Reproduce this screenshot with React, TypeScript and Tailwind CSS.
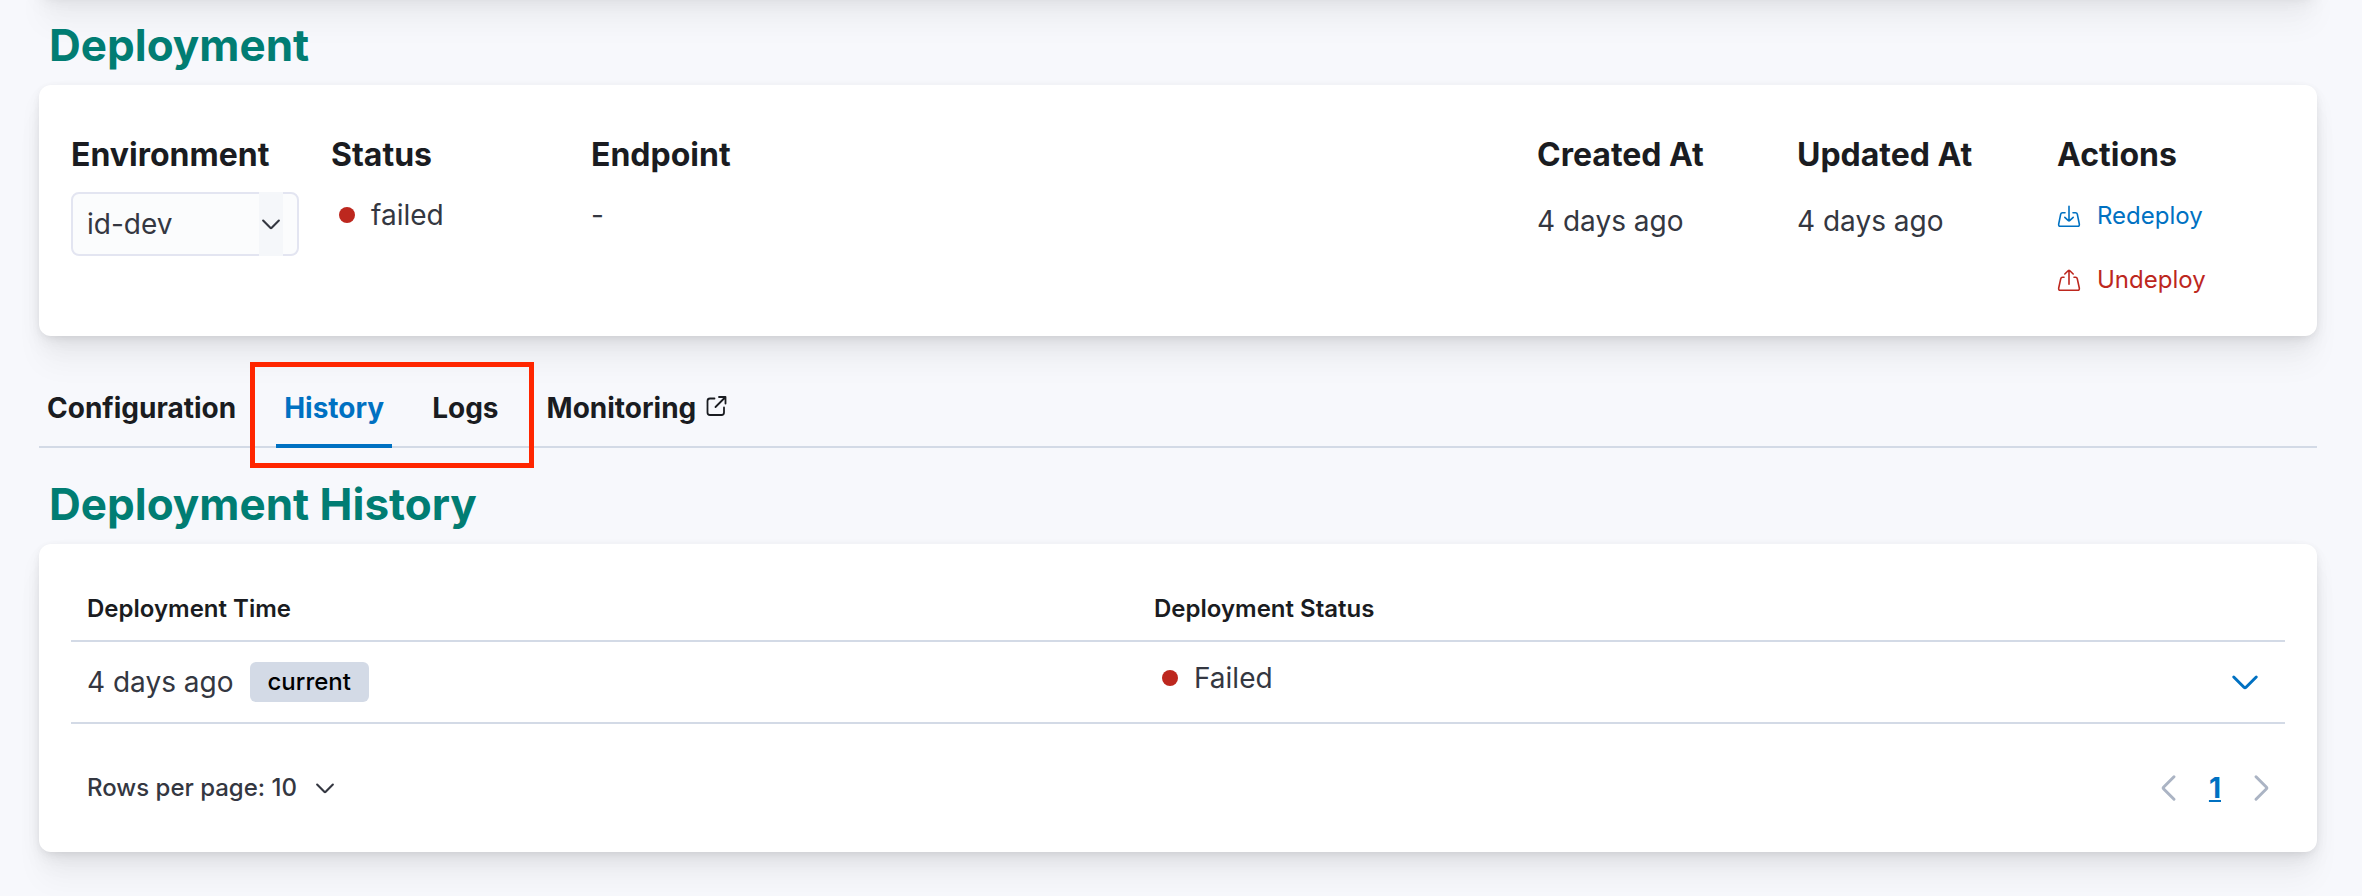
import { useState } from "react";

const CARD =
  "rounded-xl bg-white shadow-[0_2px_8px_-2px_rgba(0,0,0,0.08),0_5px_16px_-2px_rgba(0,0,0,0.06),0_11px_24px_-2px_rgba(0,0,0,0.05),0_30px_30px_-2px_rgba(0,0,0,0.04)]";
const COLUMN_TITLE = "text-[32px] leading-10 font-bold text-[#1a1c21]";
const SECTION_TITLE = "pl-2.5 text-[44px] leading-[56px] font-bold text-[#017d73]";

const ChevronDown = ({ className }: { className: string }) => (
  <svg viewBox="0 0 32 32" className={className} fill="none" stroke="currentColor" strokeWidth="2.4" strokeLinecap="round" strokeLinejoin="round" aria-hidden="true">
    <path d="M7 12 15.2 20.2Q16 21 16.8 20.2L25 12" />
  </svg>
);

const ImportIcon = () => (
  <svg viewBox="0 0 24 24" className="size-6" fill="none" stroke="currentColor" strokeWidth="1.6" strokeLinecap="round" strokeLinejoin="round" aria-hidden="true">
    <path d="M12 2.300V17M7.800 13.300 11.400 16.700Q12 17.200 12.600 16.700L16.200 13.300M8 8.700H5.500Q4 8.700 3.700 10.200L1.700 20Q1.300 22.300 3.300 22.300H20.700Q22.700 22.300 22.300 20L20.300 10.200Q20 8.700 18.500 8.700H16" />
  </svg>
);

const ExportIcon = () => (
  <svg viewBox="0 0 24 24" className="size-6" fill="none" stroke="currentColor" strokeWidth="1.6" strokeLinecap="round" strokeLinejoin="round" aria-hidden="true">
    <path d="M12 16.200V2.500M7.800 6 11.400 2.500Q12 2 12.600 2.500L16.200 6M7 9.300H5.500Q4 9.300 3.700 10.800L1.700 20Q1.300 22.300 3.300 22.300H20.700Q22.700 22.300 22.300 20L20.300 10.800Q20 9.300 18.500 9.300H17" />
  </svg>
);

const PopoutIcon = () => (
  <svg viewBox="0 0 24 24" className="mb-1 size-6" fill="none" stroke="currentColor" strokeWidth="1.8" strokeLinecap="round" strokeLinejoin="round" aria-hidden="true">
    <path d="M10.500 4.500H6Q3.500 4.500 3.500 7V18.500Q3.500 21 6 21H17.500Q20 21 20 18.500V13.500M15 3H21.500V9.500M21 3.500 11.500 13" />
  </svg>
);

const Health = ({ label }: { label: string }) => (
  <span className="flex items-center gap-4 pl-2 text-[28px] leading-10 text-[#343741]">
    <span className="size-4 rounded-full bg-[#bd271e]" />
    {label}
  </span>
);

const TABS = ["Configuration", "History", "Logs"];

export default function App() {
  const [tab, setTab] = useState("History");

  return (
    <main className="min-h-screen overflow-hidden bg-[#f7f8fc] pr-[45px] pl-[39px] font-[Inter,sans-serif] text-[#343741]">
      <div className={`-mt-10 h-9 ${CARD}`} />

      <section className="pt-[21px]">
        <h2 className={SECTION_TITLE}>Deployment</h2>
        <div className={`mt-3 flex h-[251px] px-8 pt-[50px] ${CARD}`}>
          <div className="w-[260px] shrink-0">
            <label htmlFor="environment" className={`block ${COLUMN_TITLE}`}>
              Environment
            </label>
            <div className="relative mt-[17px] h-16 w-[228px]">
              <select
                id="environment"
                className="size-full appearance-none rounded-lg border-2 border-[#e3e5f1] bg-[#fbfcfd] pl-3.5 text-[28px] text-[#343741]"
              >
                <option>id-dev</option>
              </select>
              <span className="pointer-events-none absolute inset-y-0 right-4 flex w-6 items-center justify-center bg-[#f5f7fa]">
                <ChevronDown className="size-7 shrink-0" />
              </span>
            </div>
          </div>
          <div className="w-[260px] shrink-0">
            <h3 className={COLUMN_TITLE}>Status</h3>
            <div className="mt-5">
              <Health label="failed" />
            </div>
          </div>
          <div className="flex-1">
            <h3 className={COLUMN_TITLE}>Endpoint</h3>
            <p className="mt-5 text-[28px] leading-10">-</p>
          </div>
          <div className="w-[260px] shrink-0">
            <h3 className={COLUMN_TITLE}>Created At</h3>
            <p className="mt-[26px] text-[28px] leading-10">4 days ago</p>
          </div>
          <div className="w-[260px] shrink-0">
            <h3 className={COLUMN_TITLE}>Updated At</h3>
            <p className="mt-[26px] text-[28px] leading-10">4 days ago</p>
          </div>
          <div className="w-[228px] shrink-0">
            <h3 className={COLUMN_TITLE}>Actions</h3>
            <div className="mt-[9px] flex flex-col items-start">
              <button type="button" className="flex h-16 items-center gap-4 text-2xl text-[#0071c2]">
                <ImportIcon />
                Redeploy
              </button>
              <button type="button" className="flex h-16 items-center gap-4 text-2xl text-[#bd271e]">
                <ExportIcon />
                Undeploy
              </button>
            </div>
          </div>
        </div>
      </section>

      <nav className="relative mt-8 flex h-20 gap-8 border-b-2 border-[#d3dae6] text-[28px] font-bold text-[#1a1c21]">
        {TABS.map((name) => (
          <button
            key={name}
            type="button"
            onClick={() => setTab(name)}
            className={
              name === tab
                ? "-mb-0.5 border-b-4 border-[#0071c2] px-2 pt-1 text-[#0071c2]"
                : "px-2 pt-0.5"
            }
          >
            {name}
          </button>
        ))}
        <a href="#monitoring" className="flex items-center gap-2 px-2 pt-0.5">
          Monitoring
          <PopoutIcon />
        </a>
        <span className="pointer-events-none absolute top-[-6px] left-[211px] h-[106px] w-[284px] border-[5px] border-[#ff2600]" />
      </nav>

      <section className="pt-7">
        <h2 className={SECTION_TITLE}>Deployment History</h2>
        <div className={`mt-3 h-[308px] px-8 pt-[33px] ${CARD}`}>
          <table className="w-full table-fixed border-collapse text-left">
            <thead>
              <tr className="h-16 border-b-2 border-[#d3dae6] text-2xl text-[#1a1c21]">
                <th className="w-[1067px] px-4 font-semibold">Deployment Time</th>
                <th className="px-4 font-semibold">Deployment Status</th>
                <th className="w-20" aria-label="Details" />
              </tr>
            </thead>
            <tbody>
              <tr className="h-[82px] border-b-2 border-[#d3dae6]">
                <td className="px-4">
                  <span className="flex items-center gap-4 text-[28px]">
                    4 days ago
                    <span className="rounded-md bg-[#d3dae6] px-[18px] text-2xl leading-10 font-medium text-black">
                      current
                    </span>
                  </span>
                </td>
                <td className="px-4 pb-2">
                  <Health label="Failed" />
                </td>
                <td>
                  <button type="button" aria-label="Expand" className="flex size-full items-center justify-center text-[#0071c2]">
                    <ChevronDown className="size-10" />
                  </button>
                </td>
              </tr>
            </tbody>
          </table>
          <div className="mt-8 flex h-16 items-center justify-between pr-1 pl-4">
            <button type="button" className="flex items-center gap-3.5 text-2xl font-medium">
              Rows per page: 10
              <ChevronDown className="size-7" />
            </button>
            <div className="flex items-center gap-5">
              <button type="button" aria-label="Previous page" className="text-[#abb4c4]">
                <ChevronDown className="size-10 rotate-90" />
              </button>
              <button type="button" className="text-[28px] font-bold text-[#0071c2] underline">
                1
              </button>
              <button type="button" aria-label="Next page" className="text-[#abb4c4]">
                <ChevronDown className="size-10 -rotate-90" />
              </button>
            </div>
          </div>
        </div>
      </section>
    </main>
  );
}
